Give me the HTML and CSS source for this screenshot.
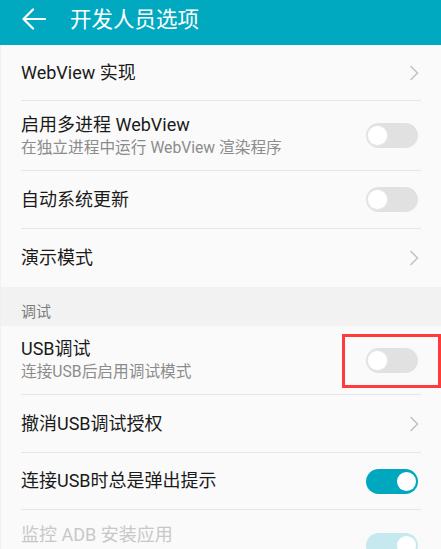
FILE: index.html
```html
<!DOCTYPE html>
<html lang="zh-CN">
<head>
<meta charset="utf-8">
<title>开发人员选项</title>
<link rel="stylesheet" href="styles.css">
</head>
<body>
<header class="appbar">
  <svg class="back" width="24" height="22" viewBox="0 0 24 22">
    <path d="M1.5 11 H23 M11 1.5 L1.5 11 L11 20.5" fill="none" stroke="#fff" stroke-width="2.2" stroke-linecap="round" stroke-linejoin="round"/>
  </svg>
  <h1 class="title">开发人员选项</h1>
</header>
<main class="page">
  <ul class="group">
    <li class="row h56">
      <div class="text"><div class="label">WebView 实现</div></div>
      <svg class="chev" width="10" height="16" viewBox="0 0 10 16"><path d="M1.5 1 L8.5 8 L1.5 15" fill="none" stroke="#c4c4c4" stroke-width="1.6"/></svg>
    </li>
    <li class="row h70">
      <div class="text">
        <div class="label">启用多进程 WebView</div>
        <div class="sub">在独立进程中运行 WebView 渲染程序</div>
      </div>
      <span class="switch"><span class="knob"></span></span>
    </li>
    <li class="row h58">
      <div class="text"><div class="label">自动系统更新</div></div>
      <span class="switch"><span class="knob"></span></span>
    </li>
    <li class="row h58 last">
      <div class="text"><div class="label">演示模式</div></div>
      <svg class="chev" width="10" height="16" viewBox="0 0 10 16"><path d="M1.5 1 L8.5 8 L1.5 15" fill="none" stroke="#c4c4c4" stroke-width="1.6"/></svg>
    </li>
  </ul>
  <div class="section">调试</div>
  <ul class="group">
    <li class="row h69 marked">
      <div class="text">
        <div class="label">USB调试</div>
        <div class="sub">连接USB后启用调试模式</div>
      </div>
      <span class="switch"><span class="knob"></span></span>
      <span class="highlight"></span>
    </li>
    <li class="row h58">
      <div class="text"><div class="label">撤消USB调试授权</div></div>
      <svg class="chev" width="10" height="16" viewBox="0 0 10 16"><path d="M1.5 1 L8.5 8 L1.5 15" fill="none" stroke="#c4c4c4" stroke-width="1.6"/></svg>
    </li>
    <li class="row h57">
      <div class="text"><div class="label">连接USB时总是弹出提示</div></div>
      <span class="switch on"><span class="knob"></span></span>
    </li>
    <li class="row cut disabled last">
      <div class="text"><div class="label">监控 ADB 安装应用</div></div>
      <span class="switch on"><span class="knob"></span></span>
    </li>
  </ul>
</main>
</body>
</html>
```

FILE: styles.css
```css
* { box-sizing: border-box; }
html, body { margin: 0; padding: 0; }
body {
  width: 441px;
  height: 549px;
  background: #fafafa;
  font-family: Roboto, "Noto Sans CJK SC", sans-serif;
  color: #1a1a1a;
  overflow: hidden;
}
.appbar {
  height: 45px;
  background: #00a9c0;
  display: flex;
  align-items: center;
  padding-left: 22px;
}
.back { display: block; margin-top: -7px; }
.title {
  margin: -6px 0 0 24px;
  font-size: 21.5px;
  font-weight: 400;
  color: #ffffff;
  line-height: 28px;
}
.page { border-left: 1px solid #edf1f6; }
.group { list-style: none; margin: 0; padding: 0; }
.row {
  position: relative;
  display: flex;
  align-items: center;
  margin: 0 20px 0 20px;
  border-bottom: 1px solid #e6e6e6;
}
.row.last { border-bottom: none; }
.h56 { height: 56px; }
.h57 { height: 57px; }
.h58 { height: 58px; }
.h69 { height: 69px; }
.h70 { height: 70px; }
.row.cut {
  height: 39px;
  align-items: flex-start;
  padding-top: 13px;
}
.row.cut .switch { margin-top: 10px; }
.text { flex: 1; }
.label { font-size: 18px; line-height: 24px; color: #1a1a1a; }
.sub { font-size: 15.7px; line-height: 22px; color: #8c8c8c; }
.disabled .label { color: #c8c8c8; }
.chev { display: block; margin-right: 2px; }
.switch {
  position: relative;
  width: 52px;
  height: 25px;
  border-radius: 13px;
  background: #e1e1e1;
  margin-right: 3px;
  flex: none;
}
.switch .knob {
  position: absolute;
  top: 3px;
  left: 1.5px;
  width: 19px;
  height: 19px;
  border-radius: 50%;
  background: #ffffff;
  box-shadow: 0 0 0 1px #e8e8e8;
}
.switch.on { background: #00a8bf; }
.switch.on .knob { left: auto; right: 2px; box-shadow: none; }
.disabled .switch.on { background: #c6e9ef; }
.section {
  height: 39px;
  background: #f2f2f2;
  padding: 15px 0 0 20px;
  font-size: 15px;
  line-height: 20px;
  color: #7d7d7d;
}
.highlight {
  position: absolute;
  left: 321px;
  top: 8px;
  width: 99px;
  height: 54px;
  border: 3.5px solid #ff3b3b;
}
```
